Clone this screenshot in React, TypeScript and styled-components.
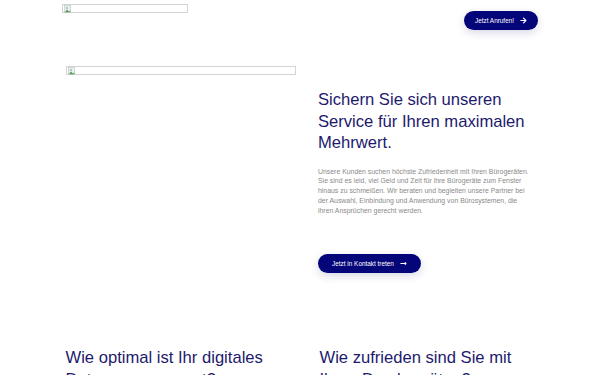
import React from "react";
import styled, { createGlobalStyle } from "styled-components";
import { FaArrowRight, FaLongArrowAltRight } from "react-icons/fa";

const GlobalStyle = createGlobalStyle`
  html, body {
    margin: 0;
    padding: 0;
    background: #ffffff;
    font-family: "Liberation Sans", Arial, sans-serif;
    overflow: hidden;
  }
`;

const NAVY = "#05057a";
const INK = "#1d1a6c";

const page = {
  wrap: styled.div`
    width: 600px;
    height: 375px;
    overflow: hidden;
  `,
  header: styled.header`
    width: 476px;
    margin: 0 auto;
    display: flex;
    justify-content: space-between;
    align-items: flex-start;
    height: 40px;
  `,
  slot: styled.div<{ top: number }>`
    padding-top: ${p => p.top}px;
  `,
  hero: styled.section`
    width: 476px;
    margin: 26px auto 0;
    display: grid;
    grid-template-columns: 238px 238px;
  `,
  media: styled.div`
    padding: 0 4px;
  `,
  copy: styled.div`
    padding: 23px 0 0 18px;
  `,
  title: styled.h2`
    margin: 0;
    font-weight: 400;
    font-size: 16.6px;
    line-height: 21.5px;
    color: ${INK};
  `,
  text: styled.p`
    margin: 13px 0 0;
    width: 215px;
    font-size: 6.9px;
    line-height: 9.8px;
    color: #8a8a8a;
  `,
  action: styled.div`
    margin-top: 37px;
  `,
  features: styled.section`
    width: 480px;
    margin: 74px auto 0;
    padding-left: 11px;
    display: grid;
    grid-template-columns: 254px 226px;
  `
};

const Placeholder = styled.div<{ w: number; h: number }>`
  width: ${p => p.w}px;
  height: ${p => p.h}px;
  box-sizing: border-box;
  border: 1px solid #d4d4d4;
  display: flex;
  align-items: center;
  padding-left: 1px;
`;

const Pill = styled.a<{ w: number }>`
  width: ${p => p.w}px;
  height: 19px;
  box-sizing: border-box;
  border-radius: 10px;
  background: ${NAVY};
  color: #ffffff;
  font-size: 6.4px;
  display: inline-flex;
  align-items: center;
  justify-content: center;
  gap: 6px;
  box-shadow: 0 3px 8px rgba(40, 40, 120, 0.18);
  text-decoration: none;
  svg {
    font-size: 7px;
  }
`;

const BrokenIcon: React.FC = () => (
  <svg width="7" height="8" viewBox="0 0 7 8">
    <rect x="0.5" y="0.5" width="6" height="7" fill="#eef2ee" stroke="#b9c0bb" strokeWidth="0.6" />
    <circle cx="3" cy="3" r="1.2" fill="#a9c6dd" />
    <path d="M0.8 7.2 L3 4.6 L5 6.4 L6.4 5.4 L6.4 7.2 Z" fill="#5aa05a" />
  </svg>
);

const ImageBox: React.FC<{ w: number; h: number }> = ({ w, h }) => (
  <Placeholder w={w} h={h}>
    <BrokenIcon />
  </Placeholder>
);

const App: React.FC = () => (
  <page.wrap>
    <GlobalStyle />
    <page.header>
      <page.slot top={4}>
        <ImageBox w={126} h={9} />
      </page.slot>
      <page.slot top={9}>
        <Pill w={74}>
          Jetzt Anrufen! <FaArrowRight />
        </Pill>
      </page.slot>
    </page.header>

    <page.hero>
      <page.media>
        <ImageBox w={230} h={9} />
      </page.media>
      <page.copy>
        <page.title>
          Sichern Sie sich unseren Service für Ihren maximalen Mehrwert.
        </page.title>
        <page.text>
          Unsere Kunden suchen höchste Zufriedenheit mit Ihren Bürogeräten. Sie sind es leid, viel
          Geld und Zeit für ihre Bürogeräte zum Fenster hinaus zu schmeißen. Wir beraten und
          begleiten unsere Partner bei der Auswahl, Einbindung und Anwendung von Bürosystemen, die
          ihren Ansprüchen gerecht werden.
        </page.text>
        <page.action>
          <Pill w={103}>
            Jetzt in Kontakt treten <FaLongArrowAltRight />
          </Pill>
        </page.action>
      </page.copy>
    </page.hero>

    <page.features>
      <page.title>Wie optimal ist Ihr digitales Datenmanagement?</page.title>
      <page.title>Wie zufrieden sind Sie mit Ihren Druckgeräten?</page.title>
    </page.features>
  </page.wrap>
);

export default App;
